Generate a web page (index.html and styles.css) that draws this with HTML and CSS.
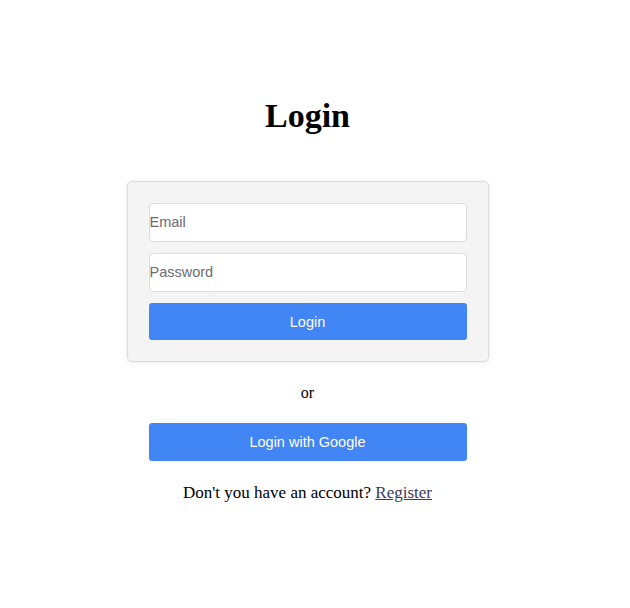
FILE: index.html
```html
<!DOCTYPE html>
<html lang="en">
<head>
<meta charset="utf-8">
<title>Login</title>
<link rel="stylesheet" href="styles.css">
</head>
<body>
<main class="page">
  <h1 class="title">Login</h1>
  <form class="card">
    <input class="field" type="email" placeholder="Email">
    <input class="field" type="password" placeholder="Password">
    <button class="btn" type="button">Login</button>
  </form>
  <p class="or">or</p>
  <button class="btn btn-google" type="button">Login with Google</button>
  <p class="signup">Don't you have an account? <a href="#" class="link">Register</a></p>
</main>
</body>
</html>
```
FILE: styles.css
```css
html, body {
  margin: 0;
  padding: 0;
  background: #fff;
}
body {
  font-family: "Liberation Serif", "Times New Roman", serif;
  font-size: 16px;
  color: #000;
}
.page {
  width: 615px;
  display: flex;
  flex-direction: column;
  align-items: center;
  padding-top: 96px;
}
.title {
  margin: 0;
  font-size: 34px;
  font-weight: bold;
  line-height: 40px;
}
.card {
  margin-top: 45px;
  width: 318px;
  padding: 21px;
  background: #f4f4f4;
  border: 1px solid #dcdcdc;
  border-radius: 5px;
  box-shadow: 0 1px 4px rgba(0,0,0,0.08);
  display: flex;
  flex-direction: column;
  gap: 11.5px;
}
.field {
  box-sizing: border-box;
  width: 100%;
  height: 38.5px;
  margin: 0;
  padding: 0;
  border: 1px solid #ddd;
  border-radius: 4px;
  background: #fff;
  font-family: "Liberation Sans", Arial, sans-serif;
  font-size: 14.5px;
  color: #333;
}
.field::placeholder {
  color: #6b6b73;
}
.btn {
  box-sizing: border-box;
  width: 318px;
  height: 37px;
  border: none;
  border-radius: 3px;
  background: #4285f4;
  color: #fff;
  font-family: "Liberation Sans", Arial, sans-serif;
  font-size: 14.5px;
  cursor: pointer;
}
.or {
  margin: 22px 0 0;
  line-height: 18px;
}
.btn-google {
  margin-top: 21px;
  height: 38px;
}
.signup {
  margin: 22px 0 0;
  font-size: 17px;
  line-height: 20px;
}
.link {
  color: #3a3a5c;
}
```
